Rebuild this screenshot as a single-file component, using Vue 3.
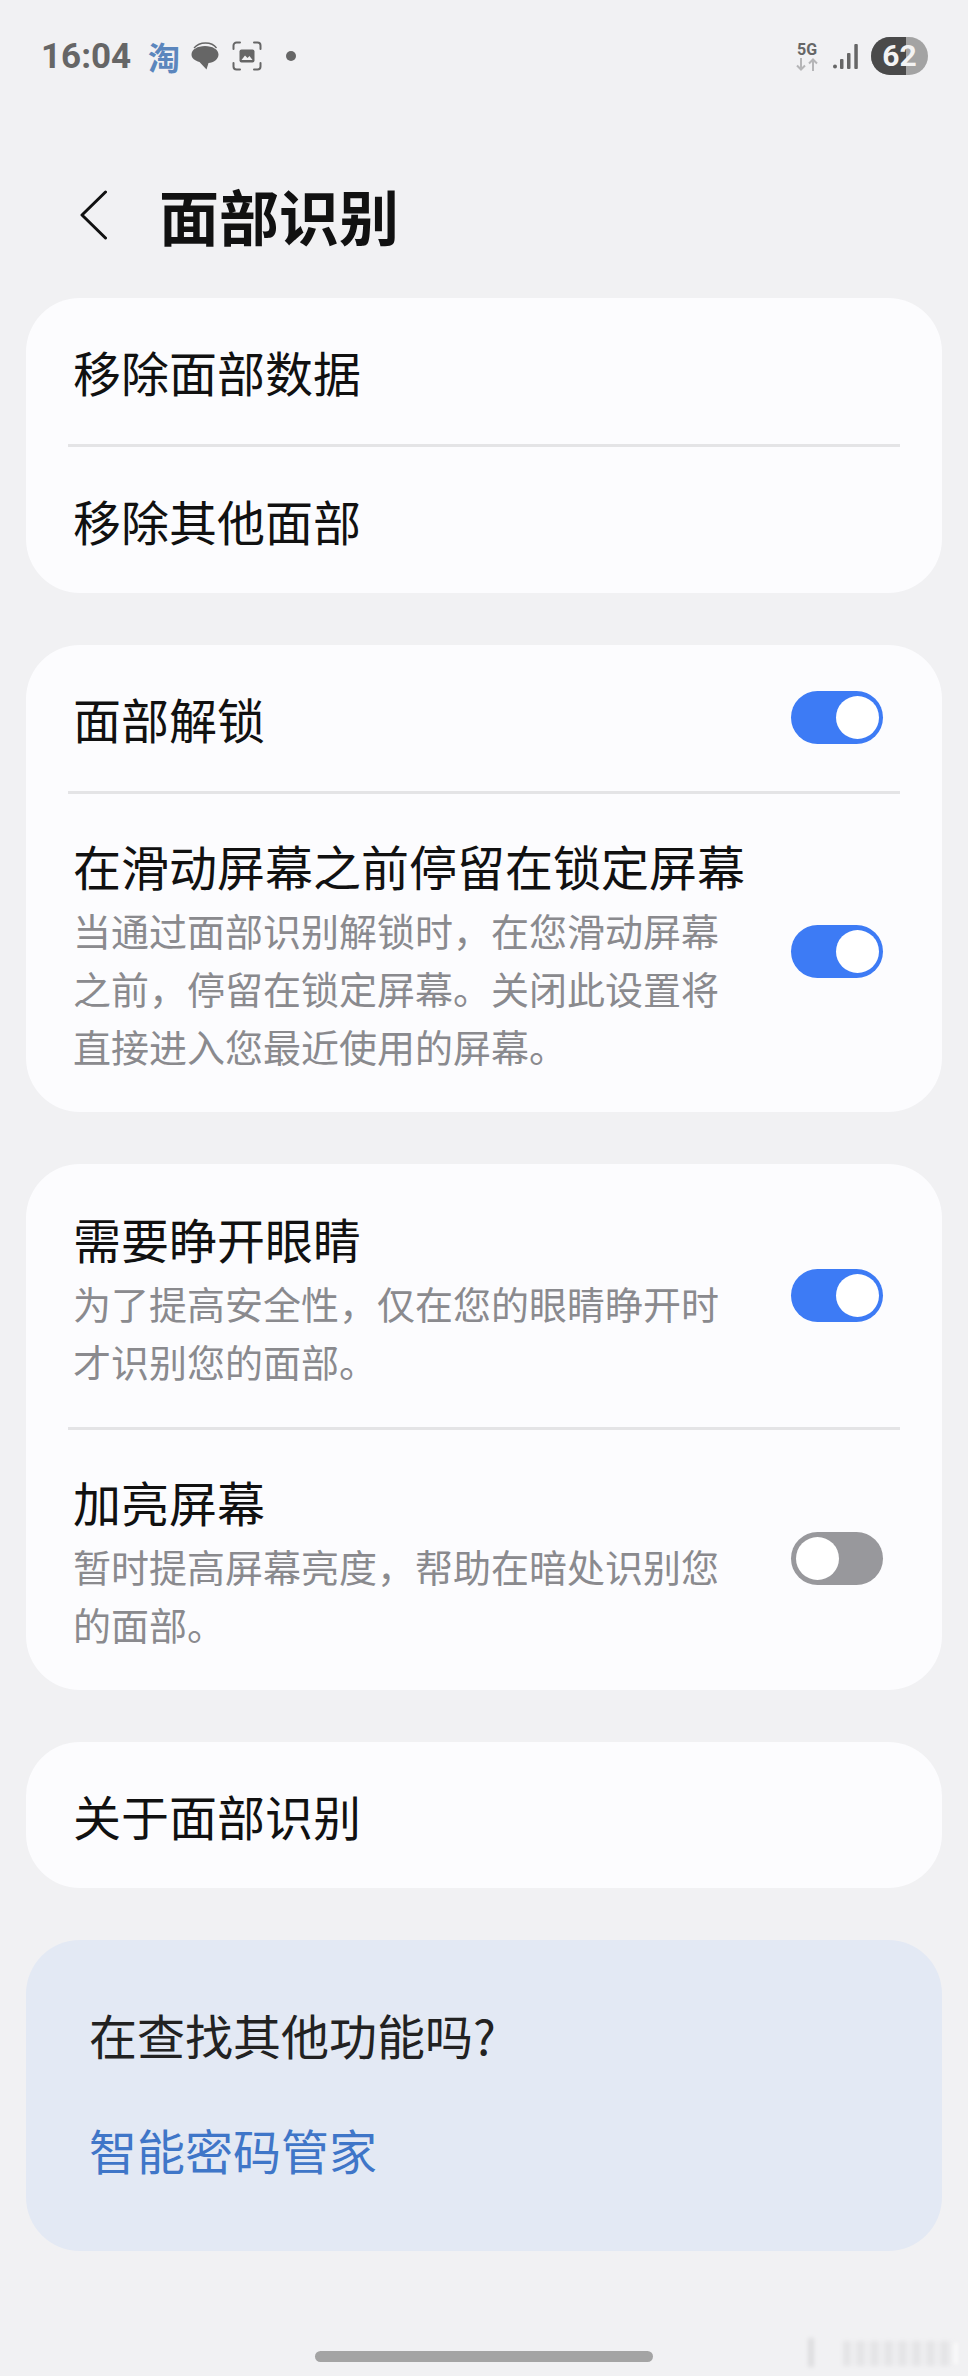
<script setup>
</script>

<template>
  <div class="page">
    <div class="status">
      <div class="status-left">
        <span class="time">16:04</span>
        <span class="tao">淘</span>
        <svg class="ico-chat" width="28" height="28" viewBox="0 0 28 28">
          <path d="M3 6C6 2.500 10 1 14.500 1s8.500 1.500 11 5" fill="none" stroke="#666" stroke-width="1.300"/>
          <path d="M0.500 12.500C0.500 7.500 6.500 4 14 4s13.500 3.500 13.500 8.500c0 5-5 8-10 8.500l-2 6.500-7-7.500C4 18.500 0.500 16.500 0.500 12.500z" fill="#666"/>
        </svg>
        <svg class="ico-shot" width="30" height="30" viewBox="0 0 30 30">
          <path d="M1.500 8V4.500a3 3 0 0 1 3-3H8M22 1.500h3.500a3 3 0 0 1 3 3V8M28.500 22v3.500a3 3 0 0 1-3 3H22M8 28.500H4.500a3 3 0 0 1-3-3V22" fill="none" stroke="#666" stroke-width="2" stroke-linecap="round"/>
          <rect x="7.500" y="8.500" width="15" height="13" rx="2" fill="#666"/>
          <path d="M9.500 19l3.500-4.500 2.500 2.500 2-2 3 4z" fill="#f1f1f3"/>
        </svg>
        <span class="dot"></span>
      </div>
      <div class="status-right">
        <div class="net">
          <span class="fiveg">5G</span>
          <svg width="22" height="13" viewBox="0 0 22 13">
            <path d="M5 0v11.500M1 7.500l4 4 4-4" fill="none" stroke="#b5b5b7" stroke-width="2"/>
            <path d="M17 13V1.500M13 5.500l4-4 4 4" fill="none" stroke="#b5b5b7" stroke-width="2"/>
          </svg>
        </div>
        <svg class="signal" width="25" height="25" viewBox="0 0 25 25">
          <circle cx="2" cy="22.500" r="2" fill="#666"/>
          <rect x="7" y="15" width="3.500" height="10" rx="1" fill="#666"/>
          <rect x="14" y="9" width="3.500" height="16" rx="1" fill="#666"/>
          <rect x="21.300" y="0" width="3.500" height="25" rx="1" fill="#666"/>
        </svg>
        <div class="battery"><span class="battery-fill"></span><span class="battery-num">62</span></div>
      </div>
    </div>

    <header class="title-bar">
      <svg class="back" width="27" height="50" viewBox="0 0 27 50">
        <path d="M25.500 2L2 25l23.500 23" fill="none" stroke="#111" stroke-width="3" stroke-linecap="round" stroke-linejoin="round"/>
      </svg>
      <h1 class="title">面部识别</h1>
    </header>

    <section class="card">
      <div class="row plain"><span class="label">移除面部数据</span></div>
      <div class="divider"></div>
      <div class="row plain"><span class="label">移除其他面部</span></div>
    </section>

    <section class="card">
      <div class="row plain between">
        <span class="label">面部解锁</span>
        <span class="switch on"></span>
      </div>
      <div class="divider"></div>
      <div class="row toggle-row">
        <div class="text">
          <div class="label">在滑动屏幕之前停留在锁定屏幕</div>
          <div class="desc">当通过面部识别解锁时，在您滑动屏幕之前，停留在锁定屏幕。关闭此设置将直接进入您最近使用的屏幕。</div>
        </div>
        <span class="switch on"></span>
      </div>
    </section>

    <section class="card">
      <div class="row toggle-row first">
        <div class="text">
          <div class="label">需要睁开眼睛</div>
          <div class="desc">为了提高安全性，仅在您的眼睛睁开时才识别您的面部。</div>
        </div>
        <span class="switch on"></span>
      </div>
      <div class="divider"></div>
      <div class="row toggle-row">
        <div class="text">
          <div class="label">加亮屏幕</div>
          <div class="desc">暂时提高屏幕亮度，帮助在暗处识别您的面部。</div>
        </div>
        <span class="switch off"></span>
      </div>
    </section>

    <section class="card">
      <div class="row plain"><span class="label">关于面部识别</span></div>
    </section>

    <section class="promo">
      <div class="promo-title">在查找其他功能吗?</div>
      <div class="promo-link">智能密码管家</div>
    </section>

    <div class="home-bar"></div>
    <div class="watermark">
      <span class="mark tall"></span>
      <span class="mark stripes"></span>
      <span class="mark edge"></span>
    </div>
  </div>
</template>

<style scoped>
.page {
  width: 968px;
  height: 2376px;
  box-sizing: border-box;
  padding: 0 26px;
  background: #f1f1f3;
  font-family: "Noto Sans CJK SC", "Liberation Sans", sans-serif;
  color: #111;
  overflow: hidden;
  display: flex;
  flex-direction: column;
  position: relative;
}
.status {
  height: 110px;
  box-sizing: border-box;
  display: flex;
  justify-content: space-between;
  align-items: center;
  padding: 2px 14px 0 15px;
  flex: none;
}
.status-left { display: flex; align-items: center; }
.time { font: 700 35px "Roboto", sans-serif; color: #666; width: 90px; }
.tao { font-size: 32px; font-weight: 700; color: #5b86bd; line-height: 32px; margin-left: 17px; width: 32px; }
.ico-chat { margin-left: 11px; }
.ico-shot { margin-left: 13px; }
.dot { width: 10px; height: 10px; border-radius: 50%; background: #666; margin-left: 24px; }
.status-right { display: flex; align-items: center; }
.net { display: flex; flex-direction: column; align-items: center; width: 22px; }
.fiveg { font: 700 16px/17px "Roboto", sans-serif; color: #666; }
.signal { margin-left: 15px; }
.battery {
  margin-left: 13px;
  width: 57px;
  height: 38px;
  border-radius: 19px;
  background: #a3a3a3;
  position: relative;
  overflow: hidden;
}
.battery-fill { position: absolute; left: 0; top: 0; bottom: 0; width: 35px; background: #4a4a4a; }
.battery-num {
  position: absolute;
  inset: 0;
  text-align: center;
  font: 700 30px/38px "Roboto", sans-serif;
  color: #f3f3f3;
}
.title-bar {
  height: 188px;
  box-sizing: border-box;
  display: flex;
  align-items: center;
  padding: 22px 0 0 54px;
  flex: none;
}
.back { flex: none; }
.title {
  margin: 0 0 0 52px;
  font-size: 60px;
  line-height: 70px;
  font-weight: 700;
  color: #111;
}
.card {
  background: #fcfcfe;
  border-radius: 54px;
  margin-bottom: 52px;
  flex: none;
}
.row { display: flex; align-items: center; }
.plain { height: 146px; box-sizing: border-box; padding: 0 59px 0 47px; }
.between { justify-content: space-between; }
.label { font-size: 48px; line-height: 60px; color: #111; white-space: nowrap; }
.divider { height: 3px; margin: 0 42px; background: #e4e4e6; }
.toggle-row { padding: 41px 59px 37px 47px; justify-content: space-between; }
.first { padding-top: 44px; }
.text { width: 659px; }
.desc { font-size: 38px; line-height: 58px; color: #8a8a8e; margin-top: 6px; }
.switch {
  flex: none;
  width: 92px;
  height: 53px;
  border-radius: 27px;
  position: relative;
}
.between .switch { margin-top: -2px; }
.toggle-row .switch { margin-top: -8px; }
.switch::after {
  content: "";
  position: absolute;
  top: 5px;
  width: 43px;
  height: 43px;
  border-radius: 50%;
  background: #fff;
}
.on { background: #3d7bf5; }
.on::after { right: 4px; }
.off { background: #98989c; }
.off::after { left: 5px; }
.promo {
  background: #e3e9f4;
  border-radius: 54px;
  height: 311px;
  box-sizing: border-box;
  padding: 62px 62px 0 63px;
  flex: none;
}
.promo-title { font-size: 48px; line-height: 64px; color: #222; }
.promo-link { font-size: 48px; line-height: 64px; color: #3f76c8; margin-top: 51px; }
.home-bar {
  position: absolute;
  left: 315px;
  top: 2351px;
  width: 338px;
  height: 11px;
  border-radius: 6px;
  background: #a4a4a4;
}
.watermark {
  position: absolute;
  left: 805px;
  top: 2338px;
  width: 152px;
  height: 29px;
  filter: blur(2px);
}
.mark { position: absolute; }
.tall { left: 3px; top: 0; bottom: 0; width: 6px; background: rgba(0, 0, 0, .08); }
.stripes {
  left: 38px;
  right: 4px;
  top: 3px;
  bottom: 1px;
  background: repeating-linear-gradient(90deg, rgba(0, 0, 0, .05) 0 7px, rgba(0, 0, 0, .015) 7px 14px);
}
.edge { right: 0; top: 5px; bottom: 3px; width: 3px; background: #fff; }
</style>

<style>
html, body { margin: 0; background: #f1f1f3; }
</style>
